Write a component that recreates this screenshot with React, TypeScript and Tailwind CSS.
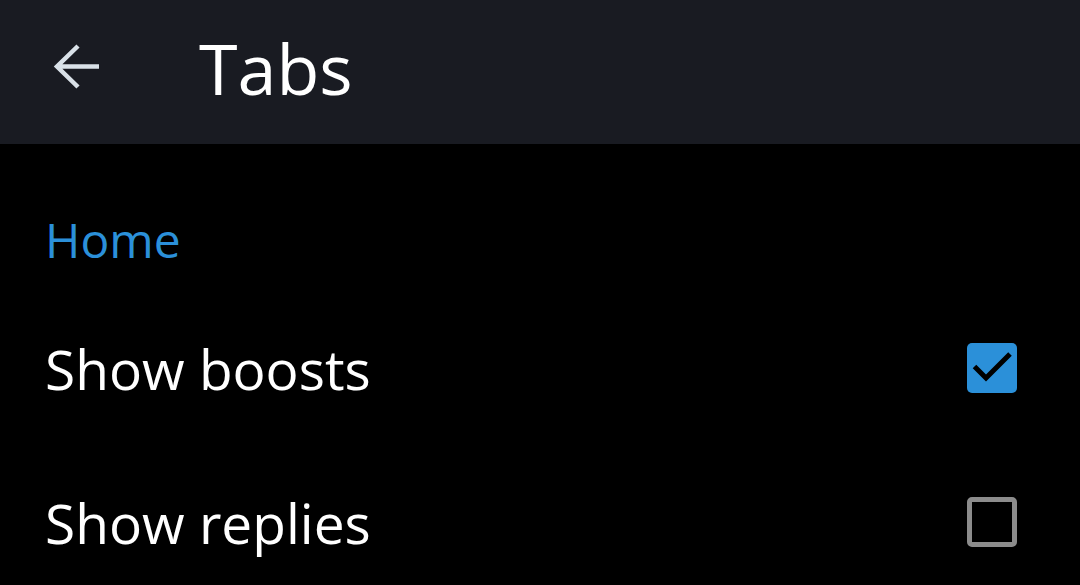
import React from "react";

function Row({ label, checked }: { label: string; checked: boolean }) {
  return (
    <div className="flex h-[154px] items-center justify-between pl-[45px] pr-[63px]">
      <span className="text-[55px] leading-none text-white">{label}</span>
      {checked ? (
        <div className="h-[50px] w-[50px] rounded-[5px] bg-[#2b90d9]">
          <svg width="50" height="50" viewBox="0 0 50 50" fill="none">
            <path d="M7.5 23.5 L19 35 L43 11" stroke="#000" strokeWidth="5" strokeLinecap="butt" />
          </svg>
        </div>
      ) : (
        <div className="h-[50px] w-[50px] rounded-[5px] border-[5px] border-[#8c8c8c]" />
      )}
    </div>
  );
}

export default function App() {
  return (
    <div
      className="h-[585px] w-[1080px] overflow-hidden bg-black"
      style={{ fontFamily: '"Open Sans", sans-serif' }}
    >
      <div className="flex h-[144px] items-center bg-[#191b22] pb-[8px]">
        <div className="mb-[3px] ml-[53px] w-[146px]">
          <svg width="50" height="50" viewBox="0 0 50 50" fill="none">
            <path d="M46 24.5 H5 M25 4 L4 24.5 L25 45" stroke="#d9e1e8" strokeWidth="4.5" strokeLinecap="butt" strokeLinejoin="miter" />
          </svg>
        </div>
        <span className="text-[70px] leading-none text-white">Tabs</span>
      </div>
      <div className="pl-[45px] pt-[72px] text-[48px] leading-none text-[#2b90d9]">Home</div>
      <div className="mt-[27px]">
        <Row label="Show boosts" checked />
        <Row label="Show replies" checked={false} />
      </div>
    </div>
  );
}
